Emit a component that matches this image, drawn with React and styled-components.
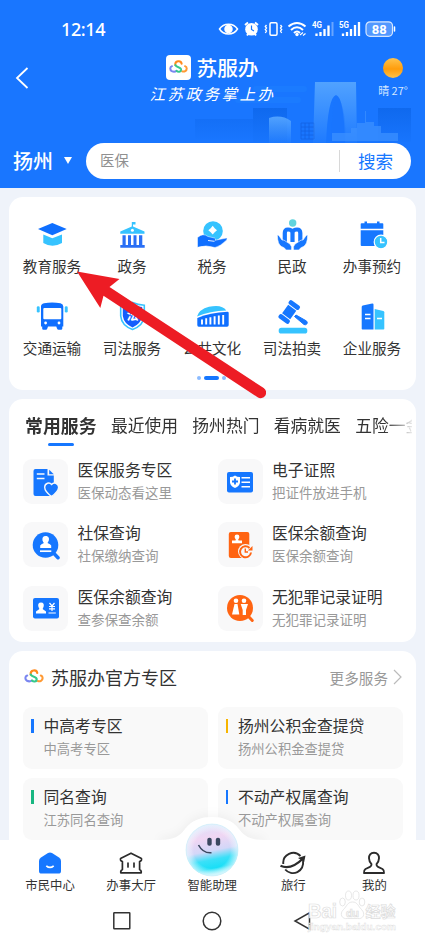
import React from "react";
import styled, { createGlobalStyle } from "styled-components";

const BLUE = "#1677ff";
const SKY = "#36c3ff";
const ORANGE = "#ff6412";

const App = () => {
  return (
    <Phone>
      <GlobalStyle />
      <Header>
        <Skyline />
        <StatusBar>
          <Time>12:14</Time>
          <StatusIcons />
        </StatusBar>
        <TitleRow>
          <Back viewBox="0 0 14 22">
            <path d="M12.5 1 L2 11 L12.5 21" />
          </Back>
          <Brand>
            <BrandName>
              <LogoBox>
                <Logo size={21} />
              </LogoBox>
              苏服办
            </BrandName>
            <Slogan>江苏政务掌上办</Slogan>
          </Brand>
          <Weather>
            <Sun />
            晴 27°
          </Weather>
        </TitleRow>
        <SearchRow>
          <City>
            扬州
            <Caret />
          </City>
          <SearchBox>
            <Query>医保</Query>
            <SearchButton>搜索</SearchButton>
          </SearchBox>
        </SearchRow>
      </Header>

      <Content>
        <Card $height={193}>
          <IconGrid>
            {categories.map((item) => (
              <Category key={item.name}>
                <svg viewBox="0 0 32 32">{item.icon}</svg>
                <span>{item.name}</span>
              </Category>
            ))}
          </IconGrid>
          <Dots>
            <Dot />
            <Dot $active />
            <Dot />
          </Dots>
        </Card>

        <Card $height={243}>
          <Tabs>
            <Tab $active>常用服务</Tab>
            <Tab>最近使用</Tab>
            <Tab>扬州热门</Tab>
            <Tab>看病就医</Tab>
            <Tab>五险一金</Tab>
          </Tabs>
          <ServiceGrid>
            {services.map((item, i) => (
              <Service key={i}>
                <ServiceIcon>
                  <svg viewBox="0 0 30 30">{item.icon}</svg>
                </ServiceIcon>
                <div>
                  <ItemTitle>{item.title}</ItemTitle>
                  <ItemText>{item.text}</ItemText>
                </div>
              </Service>
            ))}
          </ServiceGrid>
        </Card>

        <Card $height={260}>
          <ZoneHead>
            <Logo size={22} />
            <h2>苏服办官方专区</h2>
            <More>
              更多服务
              <svg viewBox="0 0 9 16">
                <path d="M1 1 L8 8 L1 15" />
              </svg>
            </More>
          </ZoneHead>
          <ZoneGrid>
            {zones.map((item) => (
              <Zone key={item.title} $color={item.color}>
                <ItemTitle>{item.title}</ItemTitle>
                <ItemText $small>{item.text}</ItemText>
              </Zone>
            ))}
          </ZoneGrid>
        </Card>
      </Content>

      <BottomBar>
        <Bump viewBox="0 0 104 40">
          <path d="M0 23 C14 23 20 19 25 12 C32 3 41 0 52 0 C63 0 72 3 79 12 C84 19 90 23 104 23 V30 H0 Z" />
        </Bump>
        <BottomTabs>
          <BottomTab>
            <svg viewBox="0 0 26 26">
              <path
                d="M13 2.4 Q14 2.4 15 3 L22 7.6 Q24 9 24 11 V21 Q24 23.6 21.4 23.6 H4.6 Q2 23.6 2 21 V11 Q2 9 4 7.6 L11 3 Q12 2.4 13 2.4Z"
                fill={BLUE}
              />
              <path d="M9.3 15.8 Q13 19 16.7 15.8" stroke="#fff" strokeWidth="1.7" fill="none" />
            </svg>
            市民中心
          </BottomTab>
          <BottomTab>
            <svg viewBox="0 0 26 26" fill="none" stroke="#2b2b2b" strokeWidth="1.7" strokeLinejoin="round" strokeLinecap="round">
              <path d="M13 3.2 L23 8.2 Q24 9 23.4 10.2 Q22.8 11.2 21.6 11.6 V19.5 Q23.6 20.5 23.2 22.8 H2.8 Q2.4 20.5 4.4 19.5 V11.6 Q3.2 11.2 2.6 10.2 Q2 9 3 8.2 Z" />
              <path d="M10 13 V17 M16 13 V17" />
            </svg>
            办事大厅
          </BottomTab>
          <BottomTab>
            <Ball viewBox="0 0 54 54">
              <defs>
                <linearGradient id="ball" x1="0.2" y1="0" x2="0.4" y2="1">
                  <stop offset="0" stopColor="#d9e2fb" />
                  <stop offset="0.3" stopColor="#f0d6f3" />
                  <stop offset="0.55" stopColor="#d3d7f8" />
                  <stop offset="0.72" stopColor="#3be0f8" />
                  <stop offset="0.88" stopColor="#19dff7" />
                  <stop offset="1" stopColor="#a6f3fb" />
                </linearGradient>
                <radialGradient id="gloss">
                  <stop offset="0.7" stopColor="#fff" stopOpacity="0" />
                  <stop offset="1" stopColor="#e4f7ff" stopOpacity="0.75" />
                </radialGradient>
              </defs>
              <circle cx="27" cy="27" r="26" fill="url(#ball)" />
              <circle cx="27" cy="27" r="26" fill="url(#gloss)" stroke="#c9eff8" strokeWidth="0.6" />
              <rect x="22.3" y="14.8" width="4.4" height="8" rx="2" fill="#3b4860" />
              <rect x="30.8" y="14.8" width="4.4" height="8" rx="2" fill="#3b4860" />
              <path d="M13.5 22 Q18 30.5 26.5 29.7" fill="none" stroke="#3b4860" strokeWidth="1.6" />
            </Ball>
            智能助理
          </BottomTab>
          <BottomTab>
            <svg viewBox="0 0 26 26" fill="none" stroke="#2b2b2b" strokeWidth="1.9">
              <path d="M3.3 14 A10 10 0 0 1 20.5 6" />
              <path d="M23 11 A10.2 10.2 0 0 1 5.2 19.5" />
              <path d="M0.5 15.8 Q11 20.5 23 8.5" strokeWidth="2.3" />
              <path d="M18 8 L25.5 5.5 L24.2 12 Z" fill="#2b2b2b" stroke="none" />
            </svg>
            旅行
          </BottomTab>
          <BottomTab>
            <svg viewBox="0 0 26 26" fill="none" stroke="#2b2b2b" strokeWidth="1.9" strokeLinejoin="round">
              <path d="M13 2.8 C9.6 2.8 7.8 5.2 8 8.3 C8.1 11 9.3 13 10.5 14.2 Q10.7 16 9 16.8 L4.5 19 Q2.6 20.3 3 23 H23 Q23.4 20.3 21.5 19 L17 16.8 Q15.3 16 15.5 14.2 C16.7 13 17.9 11 18 8.3 C18.2 5.2 16.4 2.8 13 2.8Z" />
            </svg>
            我的
          </BottomTab>
        </BottomTabs>
        <SystemNav>
          <svg viewBox="0 0 20 20">
            <rect x="1.8" y="1.8" width="16" height="16" rx="0.5" />
          </svg>
          <svg viewBox="0 0 20 20">
            <circle cx="10" cy="10" r="8.8" />
          </svg>
          <svg viewBox="0 0 20 20">
            <path d="M17.5 1.8 V18.2 L3 10 Z" />
          </svg>
        </SystemNav>
      </BottomBar>

      <Arrow viewBox="0 0 190 130">
        <path d="M1 1.5 L43.5 9 L33.5 17 L187.7 118 A5.4 5.4 0 0 1 181.6 127.2 L27.5 25.8 L24.3 38 Z" />
      </Arrow>

      <Watermark viewBox="0 0 95 50">
        <g fill="#fff" fillOpacity="0.85" stroke="#dcdcdc" strokeWidth="0.7" fontFamily="Liberation Sans, Noto Sans CJK SC, sans-serif" fontWeight="700">
          <text x="1" y="30.5" fontSize="20" textLength="29" lengthAdjust="spacingAndGlyphs">Bai</text>
          <ellipse cx="35.5" cy="15" rx="2.8" ry="4" />
          <ellipse cx="41.5" cy="8.5" rx="3" ry="4.5" />
          <ellipse cx="49" cy="8.5" rx="3" ry="4.5" />
          <ellipse cx="55" cy="15" rx="2.8" ry="4" />
          <path d="M45.5 15 C50.5 15 51 19 54.5 22.5 C59 27 56 32.5 50.5 31.5 H40.5 C35 32.5 32 27 36.5 22.5 C40 19 40.500 15 45.500 15Z" />
          <text x="39" y="29.5" fontSize="11" textLength="13">du</text>
          <text x="58.5" y="30" fontSize="15" textLength="30">经验</text>
          <text x="1" y="42.5" fontSize="9.5" strokeWidth="0.4" textLength="88" lengthAdjust="spacingAndGlyphs">
            jingyan.baidu.com
          </text>
        </g>
      </Watermark>
    </Phone>
  );
};

const Logo = ({ size }) => (
  <svg width={size} height={size} viewBox="0 0 22 22" fill="none" strokeWidth="2.1" strokeLinecap="round">
    <path d="M4.2 9.6 C1.8 10.5 1.8 13.5 4 14.8 C5.8 15.7 7.8 15.3 9 14.5" stroke="#7a86f0" />
    <path d="M17.8 9.6 C20.2 10.5 20.2 13.5 18 14.8 C16.8 15.5 15.8 15.4 14.8 15" stroke="#ff9a34" />
    <path d="M7.7 8.5 C7 3.8 13.5 3 14.3 7" stroke="#ff8a1e" />
    <path d="M7.7 8.5 C9 11.500 13.800 10 13.700 13.500 C13.400 16 10.500 16 9 14.500" stroke="#35c98c" />
  </svg>
);

const Skyline = () => (
  <SkylineSvg viewBox="0 0 270 70">
    <defs>
      <linearGradient id="tower" x1="0" y1="0" x2="0" y2="1">
        <stop offset="0" stopColor="#51a2ff" />
        <stop offset="1" stopColor="#51a2ff" stopOpacity="0.1" />
      </linearGradient>
      <linearGradient id="shade" x1="0" y1="0" x2="0" y2="1">
        <stop offset="0" stopColor="#0f69ee" />
        <stop offset="1" stopColor="#0f69ee" stopOpacity="0.1" />
      </linearGradient>
    </defs>
    <rect x="98" y="11" width="54" height="6" rx="3" fill="#1b7bff" />
    <rect x="80" y="22" width="66" height="6" rx="3" fill="#1b7bff" />
    <rect x="40" y="44" width="58" height="20" fill="url(#shade)" opacity="0.5" />
    <rect x="98" y="33" width="34" height="34" fill="url(#shade)" />
    <rect x="223" y="33" width="33" height="34" fill="url(#shade)" />
    <path d="M114 43 Q126 39 136 46 V68 H114 Z" fill="url(#tower)" />
    <path d="M146 48 H159 V64 H146 Z M146 52 H159 M146 56 H159 M146 60 H159 M150 48 V64 M154 48 V64" stroke="#1263e2" strokeWidth="0.8" fill="none" />
    <path d="M160 7 H201 L202 68 H190 Q189 22 181 20 Q173 22 171 68 H158 Z" fill="url(#tower)" />
    <path d="M177 68 Q176 20 183 22 Q192 36 190 68Z" fill="#1a76fb" opacity="0.35" />
    <path d="M210 36 H211 V47 H219 V51 H226 V58 H243 V66 H177 V58 H196 V53 H202 V48 H210Z" fill="#3d91ff" opacity="0.7" />
  </SkylineSvg>
);

const StatusIcons = () => (
  <StatusSvg viewBox="0 0 178 18">
    <g fill="none" stroke="#fff" strokeWidth="1.5">
      <path d="M1.500 9 C5.500 2.500 15.500 2.500 19.500 9 C15.500 15.500 5.500 15.500 1.500 9Z" />
      <circle cx="10.500" cy="9" r="3.500" fill="#fff" />
      <path d="M27 5 L30 2.500 M37 2.500 L40 5 M29 15.500 L30.500 13.500 M38 15.500 L36.500 13.500" strokeWidth="2" />
      <rect x="52" y="2.800" width="7" height="12.500" rx="1.200" />
      <path d="M48.500 5 L47.300 6.500 L48.500 8 L47.300 9.500 L48.500 11 L47.300 13 M62.500 5 L63.700 6.500 L62.500 8 L63.700 9.500 L62.500 11 L63.700 13" strokeWidth="1.300" />
      <path d="M70.500 6.500 Q79 -0.500 87.500 6.500 M73 10 Q79 4.500 85 10 M76 13 Q79 10 82 13" strokeWidth="2" />
      <path d="M98.500 16 V13.500 M102.500 16 V12 M106.500 16 V9 M110.500 16 V5.500 M125 16 V13.500 M129 16 V12 M133 16 V9 M137 16 V5 M141 16 V2" strokeWidth="2.300" />
      <path d="M114.500 16 V2" strokeOpacity="0.350" strokeWidth="2" />
      <rect x="148" y="1.800" width="26.500" height="14.500" rx="4" fill="#fff" fillOpacity="0.250" strokeOpacity="0.800" strokeWidth="1.200" />
      <path d="M176.500 7 V11" strokeLinecap="round" />
    </g>
    <circle cx="33.500" cy="9.200" r="6.300" fill="#fff" />
    <path d="M33.500 5.500 V9.500 L36 11" fill="none" stroke={BLUE} strokeWidth="1.200" />
    <circle cx="79" cy="14.500" r="1.700" fill="#fff" />
    <path d="M82 15 L85 12.500 M85 15.500 L87.500 13.500" stroke="#fff" strokeWidth="1.200" />
    <g fill="#fff" fontFamily="Roboto" fontWeight="700">
      <text x="94" y="7.800" fontSize="9" textLength="10" lengthAdjust="spacingAndGlyphs">4G</text>
      <text x="121" y="7.800" fontSize="9" textLength="10" lengthAdjust="spacingAndGlyphs">5G</text>
      <text x="161.300" y="13.600" fontSize="13" textAnchor="middle">88</text>
    </g>
  </StatusSvg>
);

const categories = [
  {
    name: "教育服务",
    icon: (
      <>
        <path d="M2 10 L16.3 4 L30.7 10 L16.3 16.3 Z" fill="#0f6fff" />
        <path d="M7.3 15.500 L16.300 19.300 L26 15.500 V24 Q16.300 29.500 7.300 24 Z" fill={SKY} />
      </>
    ),
  },
  {
    name: "政务",
    icon: (
      <>
        <path d="M15.8 3 H19.500 V5.500 H17 V7.500 L28.500 12.500 V14.800 H4.300 V12.500 L15.800 7.500 Z" fill={SKY} />
        <circle cx="16.4" cy="11.300" r="1.500" fill="#fff" />
        <path d="M6.500 16.300 H9.700 V26 H12 V16.300 H15 V26 H17.500 V16.300 H20.500 V26 H23 V16.300 H26.300 V26 H28.700 V28.800 H4.300 V26 H6.500Z" fill="#2a6ff5" />
      </>
    ),
  },
  {
    name: "税务",
    icon: (
      <>
        <circle cx="17" cy="12" r="9.8" fill={SKY} />
        <path d="M16.7 6.8 L18.700 9.200 L21 11.200 L18.700 13.200 L16.700 15.500 L14.700 13.200 L12.300 11.200 L14.700 9.200Z" fill="#fff" />
        <path
          d="M1.500 18.500 Q7 13.500 12 17.500 L18.500 19 Q20.500 20 19 21.300 L30.500 19 Q31.700 19.500 30.700 21 Q24 27.500 19 28.500 Q10 25.500 1.500 28.300Z"
          fill="#0f6fff"
          stroke="#fff"
          strokeWidth="0.5"
        />
        <path d="M12 21.500 L18.500 22.300" stroke="#fff" strokeWidth="0.9" />
      </>
    ),
  },
  {
    name: "民政",
    icon: (
      <>
        <circle cx="16.7" cy="4" r="3.7" fill="#5fd3dd" />
        <path
          d="M8.800 23 V14 Q8.800 10.500 12 10.500 Q15.500 10.500 16.500 13 Q17.500 10.500 21 10.500 Q24.300 10.500 24.300 14 V23 M16.500 12 V23"
          fill="none"
          stroke={BLUE}
          strokeWidth="4.200"
        />
        <path
          d="M1.3 16 Q2.500 15.500 3.500 17.500 L6 21 Q8 20.500 10 22.500 L14 25 Q16 27 15.500 31 H10 Q9 28.500 5.500 27.500 Q1.500 25.500 1.300 16Z M31.700 16 Q30.500 15.500 29.500 17.500 L27 21 Q25 20.500 23 22.500 L19 25 Q17 27 17.500 31 H23 Q24 28.500 27.500 27.500 Q31.500 25.500 31.700 16Z"
          fill={BLUE}
          stroke="#fff"
          strokeWidth="0.6"
        />
      </>
    ),
  },
  {
    name: "办事预约",
    icon: (
      <>
        <path d="M4.7 5 Q4.700 4.200 5.600 4.200 H8.500 V2.600 H11 V4.200 H21 V2.600 H23.500 V4.200 H26.500 Q27.300 4.200 27.300 5 V9.700 H4.700Z" fill={BLUE} />
        <path d="M4.700 11.300 H27.300 V26 Q27.300 27 26.300 27 H5.700 Q4.700 27 4.700 26Z" fill={BLUE} />
        <circle cx="25" cy="23" r="6.8" fill={SKY} stroke="#fff" strokeWidth="1.2" />
        <path d="M24.700 19 V23.500 H28.500" fill="none" stroke="#fff" strokeWidth="1.5" />
      </>
    ),
  },
  {
    name: "交通运输",
    icon: (
      <>
        <path
          d="M5 5.500 Q5 3 8 2.300 Q16 0.500 24.500 2.300 Q27.300 3 27.300 5.500 V25.500 H26.300 V27.500 Q26.300 28.700 25 28.700 H22.500 Q21.500 28.700 21 27.500 L20.300 25.500 H12 L11.300 27.500 Q11 28.700 9.800 28.700 H7.500 Q6.200 28.700 6.200 27.500 V25.500 H5Z"
          fill="#0f6fff"
        />
        <rect x="7.3" y="7" width="18" height="11.2" rx="1" fill="#fff" />
        <circle cx="9.6" cy="22" r="1.400" fill="#fff" />
        <circle cx="23" cy="22" r="1.400" fill="#fff" />
        <rect x="0.8" y="5.3" width="2.900" height="6.200" rx="1.300" fill={SKY} />
        <rect x="28.8" y="5.3" width="2.900" height="6.200" rx="1.300" fill={SKY} />
      </>
    ),
  },
  {
    name: "司法服务",
    icon: (
      <>
        <path d="M16.5 1.500 Q22 4 28.300 4.200 V15 Q27.500 24.500 16.500 28.500 Q5.500 24.500 4.700 15 V4.200 Q11 4 16.500 1.500Z" fill="#fff" stroke={SKY} strokeWidth="1.600" />
        <path d="M16.5 3.700 Q21 5.700 26.200 6 V15 Q25 22.800 16.500 26.400 Q8 22.800 6.800 15 V6 Q12 5.700 16.500 3.700Z" fill="#155dfc" />
        <text x="16.5" y="19" fontSize="12" fontWeight="700" textAnchor="middle" fill="#fff">法</text>
      </>
    ),
  },
  {
    name: "公共文化",
    icon: (
      <>
        <path d="M1 15.500 Q3 8.500 13 5.800 Q26 3 30.300 9.500 Q14 10 1 15.500Z" fill={SKY} />
        <path d="M1.300 17 Q14 11.500 31.500 10.800 Q32.700 10.800 32.700 12 V24 Q32.700 25.700 31 25.700 H2.700 Q1.300 25.700 1.300 24Z" fill="#0f6fff" />
        <path d="M6 18.500 V23.500 M10.200 17.200 V23.500 M14.400 16.200 V23.500 M18.600 15.200 V23.500 M22.800 14.600 V23.500 M27.200 14 V23.500" stroke="#fff" strokeWidth="1.900" />
      </>
    ),
  },
  {
    name: "司法拍卖",
    icon: (
      <>
        <g transform="translate(13.2 11) rotate(36)" fill={BLUE}>
          <rect x="-5" y="-5.200" width="10" height="10.400" />
          <rect x="-6.300" y="-11" width="12.600" height="4.800" rx="1.800" />
          <rect x="-6.300" y="6.200" width="12.600" height="4.800" rx="1.800" />
        </g>
        <path d="M18.500 15.500 L20 14 L30.500 20 Q32 21.500 30.800 23 Q29.500 24.300 28 23.500Z" fill={BLUE} stroke={BLUE} strokeLinejoin="round" />
        <rect x="2.7" y="26.800" width="28.600" height="5.800" rx="2.600" fill={SKY} />
      </>
    ),
  },
  {
    name: "企业服务",
    icon: (
      <>
        <path d="M5.700 6 Q5.700 4.800 6.800 4.500 L16.200 2.400 Q17.500 2.300 17.500 3.500 V28.600 H6.500 Q5.700 28.600 5.700 27.800Z" fill={BLUE} />
        <path d="M18.700 8 L27.300 10 Q28.300 10.300 28.300 11.300 V27.800 Q28.300 28.600 27.500 28.600 H18.700Z" fill={SKY} />
        <path d="M9 13.500 H14.500 M9 17.500 H14.500 M21 17.500 H26" stroke="#fff" strokeWidth="1.400" />
      </>
    ),
  },
];

const services = [
  {
    title: "医保服务专区",
    text: "医保动态看这里",
    icon: (
      <>
        <path d="M2.500 4 Q2.500 2 4.500 2 H16.500 V8.500 H22.800 V27 Q22.800 29 20.800 29 H4.500 Q2.500 29 2.500 27Z" fill={BLUE} />
        <path d="M18.200 2.800 L22.800 7.200 H18.200Z" fill={BLUE} />
        <path d="M5.800 7 H13.500 M5.800 11.500 H13.500" stroke="#f8f9fa" strokeWidth="1.600" />
        <path d="M20.500 29.500 C15 25.500 13.500 23 13.700 20 C14 16 18.500 14.800 20.600 17.500 C22.800 14.800 27.300 16 27.600 20 C27.700 23 26 25.500 20.500 29.500Z" fill={BLUE} stroke="#f8f9fa" strokeWidth="1.400" />
      </>
    ),
  },
  {
    title: "电子证照",
    text: "把证件放进手机",
    icon: (
      <>
        <rect x="2" y="5" width="26" height="20.5" rx="2" fill={BLUE} />
        <path d="M10 8.500 Q12 10 15 10 V15.500 Q14.500 19 10 21 Q5.500 19 5 15.500 V10 Q8 10 10 8.500Z" fill="#fff" />
        <path d="M10 11.500 V17.500 M7 14.500 H13" stroke={BLUE} strokeWidth="1.800" />
        <path d="M16.500 10.800 H25 M16.500 15.200 H25 M16.500 19.700 H25" stroke="#fff" strokeWidth="1.500" />
      </>
    ),
  },
  {
    title: "社保查询",
    text: "社保缴纳查询",
    icon: (
      <>
        <circle cx="14.5" cy="15" r="12.8" fill={BLUE} />
        <path d="M23 23.500 L27 27.700" stroke={BLUE} strokeWidth="3.500" strokeLinecap="round" />
        <path d="M14.700 6 C17.500 6 18.500 8.200 17.800 10.500 Q17 12 16.500 13 Q19.500 14 20.200 15.500 V18 H9.200 V15.500 Q10 14 12.900 13 Q12.200 12 11.500 10.500 C11 8 12 6 14.700 6Z" fill="#fff" />
        <path d="M9 21.200 H20.300" stroke="#fff" strokeWidth="1.700" />
      </>
    ),
  },
  {
    title: "医保余额查询",
    text: "医保余额查询",
    icon: (
      <>
        <rect x="3.8" y="2" width="20.5" height="26" rx="2" fill={ORANGE} />
        <circle cx="12" cy="7" r="2.4" fill="#fff" />
        <path d="M11 8 H13 L13.500 10.500 H17 V13.200 H7 V10.500 H10.500Z" fill="#fff" />
        <circle cx="20.5" cy="21.500" r="7.500" fill="#f8f9fa" />
        <path d="M24.500 18 A5.500 5.500 0 1 0 26 22.500" fill="none" stroke={ORANGE} strokeWidth="2" />
        <path d="M27.500 16 V20.500 H22.800Z" fill={ORANGE} />
        <path d="M20.300 18.500 V22 H23" fill="none" stroke={ORANGE} strokeWidth="1.400" />
      </>
    ),
  },
  {
    title: "医保余额查询",
    text: "查参保查余额",
    icon: (
      <>
        <rect x="2" y="5" width="26" height="20.5" rx="2" fill={BLUE} />
        <path d="M10 9.500 C12.500 9.500 13.300 11.500 12.600 13.700 L11.600 16 L15 18.500 V20.500 H5 V18.500 L8.400 16 L7.400 13.700 C6.700 11.500 7.500 9.500 10 9.500Z" fill="#fff" />
        <path d="M18.500 10 L21 13 L23.500 10 M21 13 V18 M18 13.500 H24 M18 15.800 H24 M17.500 20 H24.800" fill="none" stroke="#fff" strokeWidth="1.200" />
      </>
    ),
  },
  {
    title: "无犯罪记录证明",
    text: "无犯罪记录证明",
    icon: (
      <>
        <circle cx="15" cy="15" r="13" fill={ORANGE} />
        <path d="M24 24 L27.300 27.500" stroke={ORANGE} strokeWidth="3" strokeLinecap="round" />
        <circle cx="11" cy="7.8" r="2.3" fill="#fff" />
        <circle cx="19" cy="7.8" r="2.3" fill="#fff" />
        <path d="M9.500 11 H12.500 L14.300 21.500 H7Z M15.700 11 H23 L21 17 V22 H17.700 V17Z" fill="#fff" />
      </>
    ),
  },
];

const zones = [
  { title: "中高考专区", text: "中高考专区", color: "#1677ff" },
  { title: "扬州公积金查提贷", text: "扬州公积金查提贷", color: "#f7b500" },
  { title: "同名查询", text: "江苏同名查询", color: "#18b681" },
  { title: "不动产权属查询", text: "不动产权属查询", color: "#1677ff" },
];

const GlobalStyle = createGlobalStyle`
  * {
    box-sizing: border-box;
  }

  body {
    margin: 0;
    font-family: "Noto Sans CJK SC", sans-serif;
    color: #333;
  }
`;

const Phone = styled.div`
  position: relative;
  display: flex;
  flex-direction: column;
  width: 425px;
  height: 944px;
  overflow: hidden;
  background: #eff3fa;
  white-space: nowrap;
`;

const Header = styled.header`
  position: relative;
  flex: none;
  height: 188px;
  background: #1976ff;
  color: white;
`;

const SkylineSvg = styled.svg`
  position: absolute;
  left: 155px;
  top: 75px;
  width: 270px;
  height: 70px;
`;

const StatusBar = styled.div`
  display: flex;
  align-items: center;
  justify-content: space-between;
  height: 44px;
  padding: 14px 29px 0 61px;
`;

const Time = styled.span`
  font: 500 18px/30px "Noto Sans", sans-serif;
  letter-spacing: -0.4px;
`;

const StatusSvg = styled.svg`
  width: 178px;
  height: 18px;
`;

const TitleRow = styled.div`
  position: relative;
  display: grid;
  grid-template-columns: 62px 1fr 62px;
  height: 99px;
`;

const Back = styled.svg`
  width: 14px;
  height: 22px;
  margin: 23px 0 0 15px;
  fill: none;
  stroke: white;
  stroke-width: 1.8;
`;

const Brand = styled.div`
  display: flex;
  flex-direction: column;
  align-items: center;
  padding-top: 10px;
`;

const BrandName = styled.div`
  display: flex;
  align-items: center;
  gap: 5px;
  height: 26px;
  font-size: 20.7px;
  font-weight: 500;
`;

const LogoBox = styled.div`
  display: flex;
  align-items: center;
  justify-content: center;
  width: 25px;
  height: 25px;
  border-radius: 4px;
  background: white;
`;

const Slogan = styled.div`
  margin-top: 2px;
  font-size: 15.5px;
  font-style: italic;
  font-weight: 400;
  line-height: 22px;
  letter-spacing: 2.5px;
`;

const Weather = styled.div`
  display: flex;
  flex-direction: column;
  align-items: center;
  padding: 14px 2px 0 0;
  font-size: 11px;
  line-height: 16px;
  color: #d6e7ff;
`;

const Sun = styled.div`
  width: 20px;
  height: 20px;
  margin-bottom: 4px;
  border-radius: 50%;
  background: linear-gradient(#ffc34c, #ff9d0c 55%, #ffc24a);
`;

const SearchRow = styled.div`
  position: relative;
  display: flex;
  align-items: center;
  height: 36px;
  padding: 0 14px 0 13px;
`;

const City = styled.div`
  display: flex;
  align-items: center;
  width: 73px;
  padding-bottom: 2px;
  font-size: 20px;
  font-weight: 500;
`;

const Caret = styled.i`
  margin-left: 11px;
  border: 4.5px solid transparent;
  border-top: 7px solid white;
  border-bottom: 0;
`;

const SearchBox = styled.div`
  display: flex;
  align-items: center;
  flex: 1;
  height: 36px;
  border-radius: 18px;
  background: white;
`;

const Query = styled.span`
  flex: 1;
  padding: 0 0 3px 14px;
  font-size: 14.4px;
  color: #909090;
`;

const SearchButton = styled.span`
  width: 72px;
  padding-left: 18px;
  border-left: 1px solid #d8d8d8;
  font-size: 17.6px;
  line-height: 22px;
  color: #1677ff;
`;

const Content = styled.main`
  display: flex;
  flex-direction: column;
  flex: 1;
  gap: 9px;
  min-height: 0;
  padding: 9px 9px 0;
  overflow: hidden;
`;

const Card = styled.section`
  flex: none;
  height: ${(props) => props.$height}px;
  border-radius: 14px;
  background: white;
`;

const IconGrid = styled.div`
  display: grid;
  grid-template-columns: repeat(5, 80px);
  row-gap: 24px;
  padding: 22px 0 0 3px;
`;

const Category = styled.div`
  display: flex;
  flex-direction: column;
  align-items: center;
  gap: 4px;
  height: 58px;
  font-size: 14.6px;
  line-height: 22px;

  svg {
    width: 32px;
    height: 32px;
    overflow: visible;
  }
`;

const Dots = styled.div`
  display: flex;
  justify-content: center;
  align-items: center;
  gap: 3px;
  height: 4px;
  margin: 17px 3px 0 0;
`;

const Dot = styled.i`
  width: ${(props) => (props.$active ? "15px" : "4px")};
  height: 4px;
  border-radius: 2px;
  background: ${(props) => (props.$active ? "#1677ff" : "#8bbbff")};
`;

const Tabs = styled.nav`
  display: flex;
  gap: 14.3px;
  height: 60px;
  margin-right: 4px;
  padding: 13px 0 0 16px;
  overflow: hidden;
  mask-image: linear-gradient(90deg, #000 376px, transparent 406px);
`;

const Tab = styled.div`
  display: flex;
  flex: none;
  flex-direction: column;
  align-items: center;
  font-size: ${(props) => (props.$active ? "17.9px" : "16.8px")};
  font-weight: ${(props) => (props.$active ? 700 : 400)};
  line-height: 27px;

  &::after {
    content: "";
    width: 26px;
    height: 2.5px;
    margin-top: 4px;
    border-radius: 2px;
    background: ${(props) => (props.$active ? "#1677ff" : "transparent")};
  }
`;

const ServiceGrid = styled.div`
  display: grid;
  grid-template-columns: 194.5px 1fr;
  row-gap: 18.4px;
  padding-left: 14px;
`;

const Service = styled.div`
  display: flex;
  gap: 9.5px;
  height: 45px;
`;

const ServiceIcon = styled.div`
  display: flex;
  align-items: center;
  justify-content: center;
  width: 45px;
  height: 45px;
  border-radius: 9px;
  background: #f8f8f9;

  svg {
    width: 30px;
    height: 30px;
  }
`;

const ItemTitle = styled.div`
  font-size: 15.8px;
  line-height: 22px;
`;

const ItemText = styled.div`
  font-size: ${(props) => (props.$small ? "13.3px" : "13.5px")};
  line-height: 22px;
  color: #999;
`;

const ZoneHead = styled.div`
  display: flex;
  align-items: center;
  height: 56px;
  padding: 0 14px 4px 14px;

  h2 {
    flex: 1;
    margin: 0 0 0 6px;
    font-size: 18px;
    font-weight: 400;
  }
`;

const More = styled.div`
  display: flex;
  align-items: center;
  gap: 5px;
  font-size: 14.6px;
  color: #999;

  svg {
    width: 9px;
    height: 16px;
    fill: none;
    stroke: #bbb;
    stroke-width: 1.2;
  }
`;

const ZoneGrid = styled.div`
  display: grid;
  grid-template-columns: 185px 185px;
  gap: 9.5px;
  padding-left: 14px;
`;

const Zone = styled.div`
  height: 61.5px;
  padding: 8px 0 0 8px;
  border-radius: 9px;
  background: #f9f9f9;

  ${ItemTitle} {
    display: flex;
    align-items: center;
    gap: 10px;

    &::before {
      content: "";
      width: 2.5px;
      height: 14.5px;
      background: ${(props) => props.$color};
    }
  }

  ${ItemText} {
    padding: 1px 0 0 12.5px;
  }
`;

const BottomBar = styled.footer`
  position: relative;
  flex: none;
  height: 104px;
  background: white;
`;

const Bump = styled.svg`
  position: absolute;
  left: 160px;
  top: -23px;
  width: 104px;
  height: 40px;
  fill: white;
  filter: drop-shadow(0 -3px 4px rgba(0, 0, 0, 0.04));
`;

const BottomTabs = styled.div`
  position: relative;
  display: grid;
  grid-template-columns: repeat(5, 81.1px);
  padding-left: 9.5px;
  background: white;
`;

const BottomTab = styled.div`
  display: flex;
  flex-direction: column;
  align-items: center;
  justify-content: flex-end;
  height: 54px;
  font-size: 12.4px;
  line-height: 18px;

  svg {
    flex: none;
    width: 26px;
    height: 26px;
  }
`;

const Ball = styled.svg`
  && {
    width: 54px;
    height: 54px;
    margin-bottom: -1px;
  }
`;

const SystemNav = styled.div`
  display: flex;
  justify-content: space-between;
  padding: 17px 113px 0 112px;

  svg {
    width: 20px;
    height: 20px;
    overflow: visible;
    fill: none;
    stroke: #333;
    stroke-width: 1.5;
  }
`;

const Arrow = styled.svg`
  position: absolute;
  left: 76px;
  top: 270px;
  width: 190px;
  height: 130px;
  fill: #ed1c24;
`;

const Watermark = styled.svg`
  position: absolute;
  left: 307px;
  top: 887px;
  width: 95px;
  height: 50px;
`;

export default App;
